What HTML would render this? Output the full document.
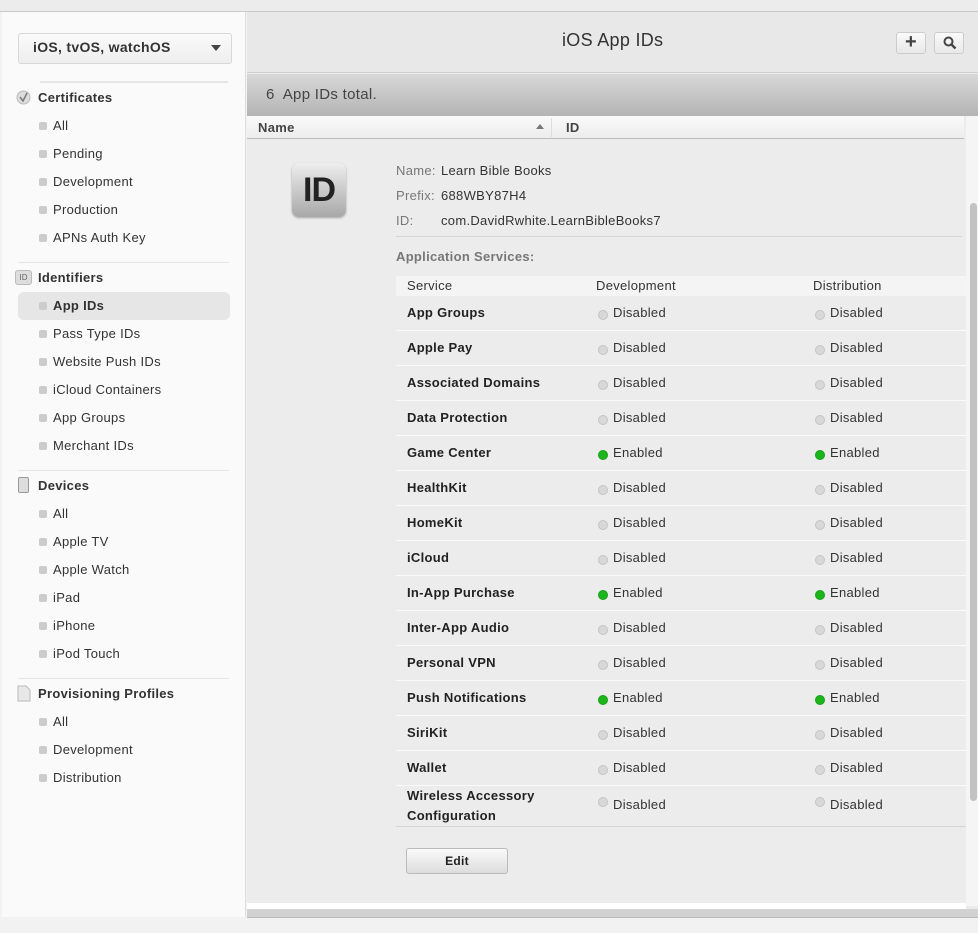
<!DOCTYPE html>
<html><head><meta charset="utf-8"><style>
*{margin:0;padding:0;box-sizing:border-box}
body{width:978px;height:933px;background:#f2f2f2;font-family:"Liberation Sans",sans-serif;font-size:13px;color:#333;position:relative;overflow:hidden;letter-spacing:.3px}
.a{position:absolute}
.t{margin-top:-1px}
.side{left:2px;top:12px;width:244px;height:905px;background:#fafafa;border-right:1px solid #ddd}
.si{position:absolute;left:53px;color:#333;font-size:13px;margin-top:-1px}
.si:before{content:"";position:absolute;left:-14px;top:4px;width:8px;height:8px;background:#ccc;border-radius:2px}
.sh{position:absolute;left:38px;font-weight:bold;color:#333;font-size:13px;margin-top:-1px}
.sep{position:absolute;left:18px;width:211px;height:1px;background:#e6e6e6}
.row{position:absolute;left:396px;width:570px;height:35px;border-bottom:1px solid #fafafa}
.row .n{position:absolute;left:11px;top:9px;font-weight:bold;color:#222}
.row .d,.row .e{position:absolute;top:9px;color:#333}
.row .d{left:217px}.row .e{left:434px}
.dot{position:absolute;left:-15px;top:5px;width:10px;height:10px;border-radius:50%;background:#d8d8d8;border:1px solid #c4c4c4}
.g{background:#1cb51c;border-color:#17a017}
</style></head><body>
<div class="a" style="left:0;top:0;width:978px;height:12px;background:#ececec;border-bottom:1px solid #c8c8c8"></div>
<div class="a side"></div>
<div class="a" style="left:18px;top:33px;width:214px;height:31px;border:1px solid #d8d8d8;border-radius:3px;background:linear-gradient(#fafafa,#eee)"></div>
<div class="a" style="left:33px;top:39px;font-size:14px;font-weight:bold;color:#333">iOS, tvOS, watchOS</div>
<div class="a" style="left:211px;top:45px;border-left:5px solid transparent;border-right:5px solid transparent;border-top:6px solid #444"></div>
<div class="sep" style="top:81px;left:40px;width:188px;height:2px"></div>
<svg class="a" style="left:16px;top:90px" width="15" height="15"><circle cx="7.5" cy="7.5" r="6.5" fill="#ddd" stroke="#bbb"/><path d="M4 7l3 4 4-8" stroke="#777" stroke-width="1.5" fill="none"/></svg>
<div class="sh" style="top:91px">Certificates</div>
<div class="si" style="top:119px">All</div>
<div class="si" style="top:147px">Pending</div>
<div class="si" style="top:175px">Development</div>
<div class="si" style="top:203px">Production</div>
<div class="si" style="top:231px">APNs Auth Key</div>
<div class="sep" style="top:262px"></div>
<div class="a" style="left:15px;top:270px;width:17px;height:15px;background:#ddd;border:1px solid #bbb;border-radius:3px;font-size:8px;color:#666;text-align:center;line-height:13px;letter-spacing:0">ID</div>
<div class="sh" style="top:271px">Identifiers</div>
<div class="a" style="left:18px;top:292px;width:212px;height:28px;background:#e6e6e6;border-radius:6px"></div>
<div class="si" style="top:299px;font-weight:bold">App IDs</div>
<div class="si" style="top:327px">Pass Type IDs</div>
<div class="si" style="top:355px">Website Push IDs</div>
<div class="si" style="top:383px">iCloud Containers</div>
<div class="si" style="top:411px">App Groups</div>
<div class="si" style="top:439px">Merchant IDs</div>
<div class="sep" style="top:470px"></div>
<div class="a" style="left:18px;top:477px;width:11px;height:16px;background:#ddd;border:1px solid #999;border-radius:2px"></div>
<div class="sh" style="top:479px">Devices</div>
<div class="si" style="top:507px">All</div>
<div class="si" style="top:535px">Apple TV</div>
<div class="si" style="top:563px">Apple Watch</div>
<div class="si" style="top:591px">iPad</div>
<div class="si" style="top:619px">iPhone</div>
<div class="si" style="top:647px">iPod Touch</div>
<div class="sep" style="top:678px"></div>
<svg class="a" style="left:17px;top:685px" width="14" height="17"><path d="M1 1h8l4 4v11H1z" fill="#e8e8e8" stroke="#bbb"/></svg>
<div class="sh" style="top:687px">Provisioning Profiles</div>
<div class="si" style="top:715px">All</div>
<div class="si" style="top:743px">Development</div>
<div class="si" style="top:771px">Distribution</div>

<div class="a" style="left:247px;top:12px;width:731px;height:905px;background:#ececec"></div>
<div class="a" style="left:247px;top:12px;width:731px;height:61px;background:#e8e8e8;border-bottom:1px solid #d0d0d0"></div>
<div class="a" style="left:562px;top:30px;font-size:18px;color:#333">iOS App IDs</div>
<div class="a" style="left:896px;top:32px;width:30px;height:22px;border:1px solid #ccc;border-radius:3px;background:linear-gradient(#fafafa,#e8e8e8);text-align:center;font-size:20px;line-height:19px;font-weight:bold;color:#444">+</div>
<div class="a" style="left:934px;top:32px;width:30px;height:22px;border:1px solid #ccc;border-radius:3px;background:linear-gradient(#fafafa,#e8e8e8)"></div>
<svg class="a" style="left:942px;top:35px" width="16" height="16"><circle cx="6.5" cy="6.5" r="4" fill="none" stroke="#444" stroke-width="2"/><path d="M9.5 9.5l4 4" stroke="#444" stroke-width="2.4"/></svg>
<div class="a" style="left:247px;top:74px;width:731px;height:42px;background:linear-gradient(#d8d8d8,#b4b4b4)"></div>
<div class="a" style="left:266px;top:86px;font-size:15px;color:#444">6&nbsp; App IDs total.</div>
<div class="a" style="left:247px;top:116px;width:717px;height:23px;background:linear-gradient(#fafafa,#ececec);border-bottom:1px solid #bbb"></div>
<div class="a" style="left:551px;top:118px;width:1px;height:19px;background:#ddd"></div>
<div class="a t" style="left:258px;top:121px;font-weight:bold;color:#444">Name</div>
<div class="a" style="left:536px;top:124px;border-left:4px solid transparent;border-right:4px solid transparent;border-bottom:5px solid #777"></div>
<div class="a t" style="left:566px;top:121px;font-weight:bold;color:#444">ID</div>
<div class="a" style="left:966px;top:116px;width:12px;height:790px;background:#f5f5f5"></div>
<div class="a" style="left:970px;top:203px;width:7px;height:598px;background:#c2c2c2;border-radius:4px"></div>

<div class="a" style="left:292px;top:163px;width:54px;height:54px;border-radius:7px;background:linear-gradient(#eee,#a8a8a8);box-shadow:0 1px 2px rgba(0,0,0,.3);text-align:center;font-size:34px;font-weight:bold;line-height:54px;color:#222;letter-spacing:-1px">ID</div>
<div class="a t" style="left:396px;top:164px;color:#777">Name:</div><div class="a t" style="left:441px;top:164px">Learn Bible Books</div>
<div class="a t" style="left:396px;top:189px;color:#777">Prefix:</div><div class="a t" style="left:441px;top:189px">688WBY87H4</div>
<div class="a t" style="left:396px;top:214px;color:#777">ID:</div><div class="a t" style="left:441px;top:214px">com.DavidRwhite.LearnBibleBooks7</div>
<div class="a" style="left:396px;top:236px;width:566px;height:1px;background:#d6d6d6"></div>
<div class="a t" style="left:396px;top:250px;color:#777;font-weight:bold">Application Services:</div>
<div class="a" style="left:396px;top:276px;width:570px;height:20px;background:#f4f4f4"></div>
<div class="a t" style="left:407px;top:279px">Service</div>
<div class="a t" style="left:596px;top:279px">Development</div>
<div class="a t" style="left:813px;top:279px">Distribution</div>

<div class="row" style="top:296px"><span class="n">App Groups</span><span class="d"><i class="dot"></i>Disabled</span><span class="e"><i class="dot"></i>Disabled</span></div>
<div class="row" style="top:331px"><span class="n">Apple Pay</span><span class="d"><i class="dot"></i>Disabled</span><span class="e"><i class="dot"></i>Disabled</span></div>
<div class="row" style="top:366px"><span class="n">Associated Domains</span><span class="d"><i class="dot"></i>Disabled</span><span class="e"><i class="dot"></i>Disabled</span></div>
<div class="row" style="top:401px"><span class="n">Data Protection</span><span class="d"><i class="dot"></i>Disabled</span><span class="e"><i class="dot"></i>Disabled</span></div>
<div class="row" style="top:436px"><span class="n">Game Center</span><span class="d"><i class="dot g"></i>Enabled</span><span class="e"><i class="dot g"></i>Enabled</span></div>
<div class="row" style="top:471px"><span class="n">HealthKit</span><span class="d"><i class="dot"></i>Disabled</span><span class="e"><i class="dot"></i>Disabled</span></div>
<div class="row" style="top:506px"><span class="n">HomeKit</span><span class="d"><i class="dot"></i>Disabled</span><span class="e"><i class="dot"></i>Disabled</span></div>
<div class="row" style="top:541px"><span class="n">iCloud</span><span class="d"><i class="dot"></i>Disabled</span><span class="e"><i class="dot"></i>Disabled</span></div>
<div class="row" style="top:576px"><span class="n">In-App Purchase</span><span class="d"><i class="dot g"></i>Enabled</span><span class="e"><i class="dot g"></i>Enabled</span></div>
<div class="row" style="top:611px"><span class="n">Inter-App Audio</span><span class="d"><i class="dot"></i>Disabled</span><span class="e"><i class="dot"></i>Disabled</span></div>
<div class="row" style="top:646px"><span class="n">Personal VPN</span><span class="d"><i class="dot"></i>Disabled</span><span class="e"><i class="dot"></i>Disabled</span></div>
<div class="row" style="top:681px"><span class="n">Push Notifications</span><span class="d"><i class="dot g"></i>Enabled</span><span class="e"><i class="dot g"></i>Enabled</span></div>
<div class="row" style="top:716px"><span class="n">SiriKit</span><span class="d"><i class="dot"></i>Disabled</span><span class="e"><i class="dot"></i>Disabled</span></div>
<div class="row" style="top:751px"><span class="n">Wallet</span><span class="d"><i class="dot"></i>Disabled</span><span class="e"><i class="dot"></i>Disabled</span></div>
<div class="row" style="top:786px;height:41px;border-bottom:1px solid #d6d6d6"><span class="n" style="top:0;line-height:20px">Wireless Accessory<br>Configuration</span><span class="d" style="top:11px"><i class="dot" style="top:0"></i>Disabled</span><span class="e" style="top:11px"><i class="dot" style="top:0"></i>Disabled</span></div>

<div class="a" style="left:406px;top:848px;width:102px;height:26px;border:1px solid #bbb;border-radius:3px;background:linear-gradient(#fafafa,#ddd);text-align:center;line-height:24px;font-weight:bold;font-size:12px;color:#222">Edit</div>
<div class="a" style="left:247px;top:903px;width:719px;height:6px;background:#fff"></div>
<div class="a" style="left:247px;top:909px;width:731px;height:9px;background:#d2d2d2;border-bottom:1px solid #bbb"></div>
</body></html>
